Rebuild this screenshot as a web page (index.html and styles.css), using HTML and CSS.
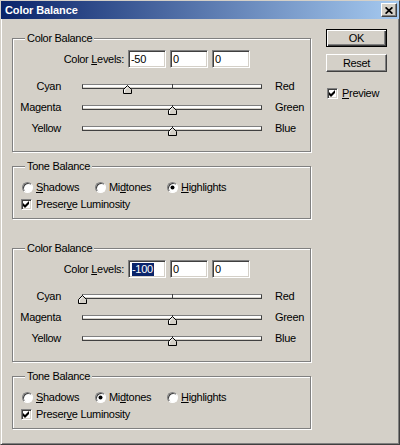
FILE: index.html
```html
<!DOCTYPE html>
<html>
<head>
<meta charset="utf-8">
<title>Color Balance</title>
<link rel="stylesheet" href="styles.css">
</head>
<body>
<div class="window">
  <div class="titlebar">
    <span class="title">Color Balance</span>
    <span class="close"><svg width="8" height="7" viewBox="0 0 8 7"><path d="M0.6 0.3 L7.4 6.7 M7.4 0.3 L0.6 6.7" stroke="#000" stroke-width="1.7" fill="none"/></svg></span>
  </div>
  <div class="content">
    <div class="main">
      <fieldset class="group">
        <legend>Color Balance</legend>
        <div class="levels">
          <span class="levels-label">Color <u>L</u>evels:</span>
          <span class="field">-50</span>
          <span class="field">0</span>
          <span class="field">0</span>
        </div>
        <div class="slider-row first">
          <span class="sl-left">Cyan</span>
          <div class="slider"><div class="track"></div><svg class="thumb" style="left:45px" width="9" height="9" viewBox="0 0 9 9"><polygon points="4.5,0.5 8.5,4.5 8.5,8.5 0.5,8.5 0.5,4.5" fill="#d4d0c8" stroke="#000"/><polyline points="1.5,7.5 1.5,4.9 4.5,1.9" fill="none" stroke="#fff"/></svg></div>
          <span class="sl-right">Red</span>
        </div>
        <div class="slider-row">
          <span class="sl-left">Magenta</span>
          <div class="slider"><div class="track"></div><svg class="thumb" style="left:90px" width="9" height="9" viewBox="0 0 9 9"><polygon points="4.5,0.5 8.5,4.5 8.5,8.5 0.5,8.5 0.5,4.5" fill="#d4d0c8" stroke="#000"/><polyline points="1.5,7.5 1.5,4.9 4.5,1.9" fill="none" stroke="#fff"/></svg></div>
          <span class="sl-right">Green</span>
        </div>
        <div class="slider-row">
          <span class="sl-left">Yellow</span>
          <div class="slider"><div class="track"></div><svg class="thumb" style="left:90px" width="9" height="9" viewBox="0 0 9 9"><polygon points="4.5,0.5 8.5,4.5 8.5,8.5 0.5,8.5 0.5,4.5" fill="#d4d0c8" stroke="#000"/><polyline points="1.5,7.5 1.5,4.9 4.5,1.9" fill="none" stroke="#fff"/></svg></div>
          <span class="sl-right">Blue</span>
        </div>
      </fieldset>

      <fieldset class="group tone g2">
        <legend>Tone Balance</legend>
        <div class="radios">
          <span class="radio-item w73"><span class="radio"></span><span><u>S</u>hadows</span></span>
          <span class="radio-item w72"><span class="radio"></span><span>Mi<u>d</u>tones</span></span>
          <span class="radio-item"><span class="radio on"></span><span><u>H</u>ighlights</span></span>
        </div>
        <div class="check-row">
          <span class="box"><svg width="7" height="7" viewBox="0 0 7 7"><path d="M0 2 L2 4 L6 0 L6 3 L2 7 L0 5 Z" fill="#000"/></svg></span>
          <span>Preser<u>v</u>e Luminosity</span>
        </div>
      </fieldset>

      <fieldset class="group g3">
        <legend>Color Balance</legend>
        <div class="levels">
          <span class="levels-label">Color <u>L</u>evels:</span>
          <span class="field"><span class="sel">-100</span></span>
          <span class="field">0</span>
          <span class="field">0</span>
        </div>
        <div class="slider-row first">
          <span class="sl-left">Cyan</span>
          <div class="slider"><div class="track"></div><svg class="thumb" style="left:0px" width="9" height="9" viewBox="0 0 9 9"><polygon points="4.5,0.5 8.5,4.5 8.5,8.5 0.5,8.5 0.5,4.5" fill="#d4d0c8" stroke="#000"/><polyline points="1.5,7.5 1.5,4.9 4.5,1.9" fill="none" stroke="#fff"/></svg></div>
          <span class="sl-right">Red</span>
        </div>
        <div class="slider-row">
          <span class="sl-left">Magenta</span>
          <div class="slider"><div class="track"></div><svg class="thumb" style="left:90px" width="9" height="9" viewBox="0 0 9 9"><polygon points="4.5,0.5 8.5,4.5 8.5,8.5 0.5,8.5 0.5,4.5" fill="#d4d0c8" stroke="#000"/><polyline points="1.5,7.5 1.5,4.9 4.5,1.9" fill="none" stroke="#fff"/></svg></div>
          <span class="sl-right">Green</span>
        </div>
        <div class="slider-row">
          <span class="sl-left">Yellow</span>
          <div class="slider"><div class="track"></div><svg class="thumb" style="left:90px" width="9" height="9" viewBox="0 0 9 9"><polygon points="4.5,0.5 8.5,4.5 8.5,8.5 0.5,8.5 0.5,4.5" fill="#d4d0c8" stroke="#000"/><polyline points="1.5,7.5 1.5,4.9 4.5,1.9" fill="none" stroke="#fff"/></svg></div>
          <span class="sl-right">Blue</span>
        </div>
      </fieldset>

      <fieldset class="group tone g4">
        <legend>Tone Balance</legend>
        <div class="radios">
          <span class="radio-item w73"><span class="radio"></span><span><u>S</u>hadows</span></span>
          <span class="radio-item w72"><span class="radio on"></span><span>Mi<u>d</u>tones</span></span>
          <span class="radio-item"><span class="radio"></span><span><u>H</u>ighlights</span></span>
        </div>
        <div class="check-row">
          <span class="box"><svg width="7" height="7" viewBox="0 0 7 7"><path d="M0 2 L2 4 L6 0 L6 3 L2 7 L0 5 Z" fill="#000"/></svg></span>
          <span>Preser<u>v</u>e Luminosity</span>
        </div>
      </fieldset>
    </div>

    <div class="side">
      <span class="btn default">OK</span>
      <span class="btn">Reset</span>
      <span class="preview"><span class="box"><svg width="7" height="7" viewBox="0 0 7 7"><path d="M0 2 L2 4 L6 0 L6 3 L2 7 L0 5 Z" fill="#000"/></svg></span><span><u>P</u>review</span></span>
    </div>
  </div>
</div>
</body>
</html>
```

FILE: styles.css
```css
* { box-sizing: border-box; }
html, body { margin: 0; padding: 0; background: #d4d0c8; }
body {
  font-family: "Liberation Sans", Arial, sans-serif;
  font-size: 11px;
  letter-spacing: -0.3px;
  color: #000;
}
u { text-decoration: underline; text-underline-offset: 1px; }

.window {
  width: 400px;
  height: 445px;
  background: #d4d0c8;
  border: 1px solid;
  border-color: #d4d0c8 #404040 #404040 #d4d0c8;
  box-shadow: inset 1px 1px #fff, inset -1px -1px #808080;
}

.titlebar {
  display: flex;
  align-items: center;
  justify-content: space-between;
  height: 18px;
  padding: 0 2px 0 4px;
  background: linear-gradient(to right, #0a246a, #a6caf0);
  color: #fff;
  font-weight: bold;
  letter-spacing: -0.1px;
}
.close {
  width: 16px;
  height: 14px;
  display: flex;
  align-items: center;
  justify-content: center;
  background: #d4d0c8;
  border: 1px solid;
  border-color: #fff #404040 #404040 #fff;
  box-shadow: inset -1px -1px #808080;
}

.content { display: flex; align-items: flex-start; }
.main { margin-left: 11px; margin-top: 13px; width: 299px; }
.side {
  margin-left: 15px;
  margin-top: 10px;
  width: 61px;
  display: flex;
  flex-direction: column;
}

fieldset.group {
  margin: 0;
  padding: 0 0 12px 0;
  min-width: 0;
  border: 1px solid #808080;
  box-shadow: inset 1px 1px #fff, 1px 1px #fff;
}
fieldset.tone { padding-bottom: 6px; }
.g2 { margin-top: 8px !important; }
.g3 { margin-top: 23px !important; }
.g4 { margin-top: 8px !important; }
legend {
  margin-left: 12px;
  padding: 0 2px;
  line-height: 13px;
  background: #d4d0c8;
}

.levels {
  display: flex;
  align-items: center;
  height: 18px;
  margin-top: 5px;
}
.levels-label { width: 111px; text-align: right; margin-right: 4px; }
.field {
  width: 38px;
  height: 18px;
  margin-right: 4px;
  padding-left: 2px;
  line-height: 16px;
  background: #fff;
  border: 1px solid;
  border-color: #808080 #fff #fff #808080;
  box-shadow: inset 1px 1px #404040, inset -1px -1px #d4d0c8;
}
.sel {
  display: inline-block;
  background: #0a246a;
  color: #fff;
  line-height: 13px;
  margin-left: 1px;
  padding-right: 1px;
}

.slider-row { display: flex; height: 21px; line-height: 21px; }
.slider-row.first { margin-top: 8px; }
.sl-left { width: 48px; text-align: right; }
.sl-right { margin-left: 9px; }
.slider { position: relative; width: 188px; margin-left: 17px; }
.track {
  position: relative;
  margin: 8px 0 0 4px;
  width: 180px;
  height: 5px;
  background: #fff;
  border: 1px solid #404040;
  border-top-color: #808080;
  box-shadow: inset 0 -1px #d4d0c8;
}
.track::after {
  content: "";
  position: absolute;
  left: 89px;
  top: -1px;
  width: 1px;
  height: 5px;
  background: #404040;
}
.thumb { position: absolute; top: 9px; display: block; }

.radios {
  display: flex;
  align-items: center;
  height: 16px;
  margin-top: 6px;
  padding-left: 9px;
}
.radio-item { display: flex; align-items: center; }
.w73 { width: 73px; }
.w72 { width: 72px; }
.radio {
  position: relative;
  width: 11px;
  height: 11px;
  margin-right: 3px;
  border-radius: 50%;
  background: #fff;
  border: 1px solid;
  border-color: #808080 #fff #fff #808080;
  box-shadow: inset 1px 1px #404040;
}
.radio.on::after {
  content: "";
  position: absolute;
  left: 3px;
  top: 3px;
  width: 3px;
  height: 3px;
  border-radius: 50%;
  background: #000;
  box-shadow: 0 0 0 0.5px #000;
}
.check-row {
  display: flex;
  align-items: center;
  height: 16px;
  margin-top: 1px;
  padding-left: 8px;
}
.box {
  display: flex;
  align-items: center;
  justify-content: center;
  width: 11px;
  height: 11px;
  margin-right: 4px;
  background: #fff;
  border: 1px solid;
  border-color: #808080 #fff #fff #808080;
  box-shadow: inset 1px 1px #404040, inset -1px -1px #d4d0c8;
}
.box svg { display: block; }

.btn {
  display: flex;
  align-items: center;
  justify-content: center;
  width: 61px;
  height: 18px;
  background: #d4d0c8;
  border: 1px solid;
  border-color: #fff #404040 #404040 #fff;
  box-shadow: inset -1px -1px #808080;
}
.btn.default {
  border-color: #000;
  box-shadow: inset 1px 1px #fff, inset -1px -1px #404040, inset -2px -2px #808080;
  margin-bottom: 7px;
}
.preview {
  display: flex;
  align-items: center;
  height: 16px;
  margin-top: 13px;
  margin-left: 1px;
}
```
